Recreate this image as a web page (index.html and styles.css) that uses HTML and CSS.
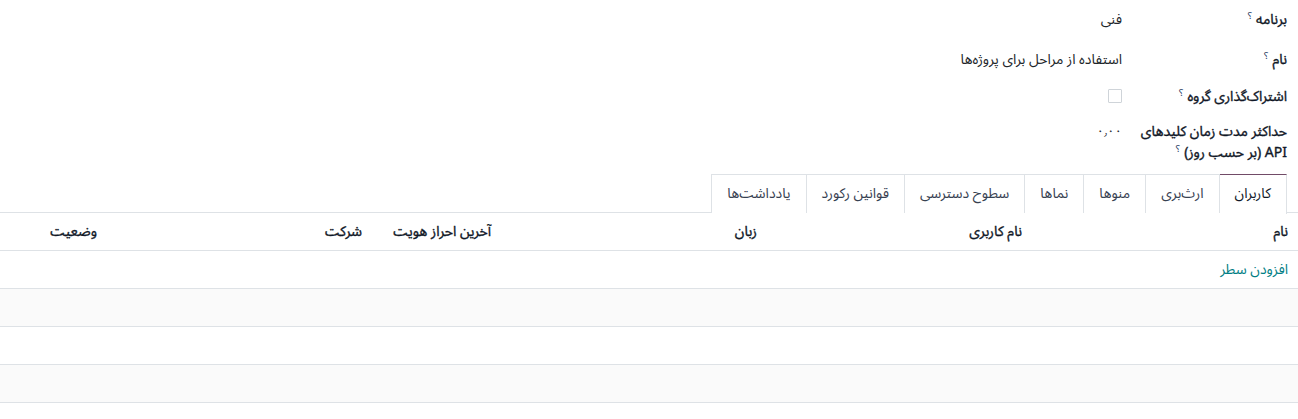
FILE: index.html
```html
<!DOCTYPE html>
<html lang="fa" dir="rtl">
<head>
<meta charset="utf-8">
<link rel="stylesheet" href="styles.css">
</head>
<body>
<div class="sheet">
  <div class="group">
    <div class="row r1">
      <div class="label">برنامه<sup class="help">؟</sup></div>
      <div class="value">فنی</div>
    </div>
    <div class="row r2">
      <div class="label">نام<sup class="help">؟</sup></div>
      <div class="value">استفاده از مراحل برای پروژه‌ها</div>
    </div>
    <div class="row r3">
      <div class="label">اشتراک‌گذاری گروه<sup class="help">؟</sup></div>
      <div class="value"><span class="check"></span></div>
    </div>
    <div class="row r4">
      <div class="label">حداکثر مدت زمان کلیدهای API (بر حسب روز)<sup class="help">؟</sup></div>
      <div class="value num">٠٫٠٠</div>
    </div>
  </div>

  <div class="tabs">
    <div class="tab active">کاربران</div>
    <div class="tab">ارث‌بری</div>
    <div class="tab">منوها</div>
    <div class="tab">نماها</div>
    <div class="tab">سطوح دسترسی</div>
    <div class="tab">قوانین رکورد</div>
    <div class="tab">یادداشت‌ها</div>
  </div>

  <table class="list">
    <colgroup>
      <col class="c1"><col class="c2"><col class="c3"><col class="c4"><col class="c5"><col class="c6">
    </colgroup>
    <thead>
      <tr>
        <th>نام</th>
        <th>نام کاربری</th>
        <th>زبان</th>
        <th>آخرین احراز هویت</th>
        <th>شرکت</th>
        <th>وضعیت</th>
      </tr>
    </thead>
    <tbody>
      <tr><td colspan="6"><a class="add">افزودن سطر</a></td></tr>
      <tr class="alt"><td colspan="6"></td></tr>
      <tr><td colspan="6"></td></tr>
      <tr class="alt"><td colspan="6"></td></tr>
    </tbody>
  </table>
</div>
</body>
</html>
```

FILE: styles.css
```css
html, body {
  margin: 0;
  padding: 0;
  background: #fff;
}
body {
  font-family: "Noto Sans Arabic", "DejaVu Sans", sans-serif;
  font-size: 14px;
  line-height: 21px;
  color: #212529;
  direction: rtl;
}
.sheet {
  width: 1298px;
}
.group {
  padding: 9px 11px 0 0;
  display: flex;
  flex-direction: column;
}
.row {
  display: grid;
  grid-template-columns: 160px 300px;
  column-gap: 5px;
}
.r1 { height: 40px; }
.r2 { height: 37px; }
.r3 { height: 35px; }
.r4 { height: 53px; }
.label {
  font-weight: normal;
  -webkit-text-stroke: 0.35px #111827;
  color: #111827;
  width: 155px;
}
.help {
  font-size: 10px;
  font-weight: normal;
  -webkit-text-stroke: 0;
  color: #1f3a5f;
  padding: 0 4px;
  vertical-align: 5px;
  line-height: 0;
}
.value {
  color: #212529;
}
.num {
  font-size: 13px;
}
.check {
  display: inline-block;
  width: 12px;
  height: 12px;
  border: 1px solid #cfd4d9;
  border-radius: 1px;
  margin-top: 3px;
  vertical-align: top;
}
.tabs {
  display: flex;
  padding-right: 11px;
  border-bottom: 1px solid #dee2e6;
  height: 39px;
  box-sizing: border-box;
}
.tab {
  padding: 0 15px;
  height: 39px;
  box-sizing: border-box;
  border: 1px solid #dee2e6;
  border-left: none;
  border-bottom: none;
  line-height: 37px;
  color: #374151;
  background: #fff;
}
.tab:last-child {
  border-left: 1px solid #dee2e6;
}
.tab.active {
  border-top: 1px solid #714b67;
  color: #111827;
  height: 40px;
  position: relative;
  z-index: 1;
}
.list {
  width: 1298px;
  border-collapse: collapse;
  table-layout: fixed;
}
.c1 { width: 266px; }
.c2 { width: 265px; }
.c3 { width: 266px; }
.c4 { width: 129px; }
.c5 { width: 265px; }
.c6 { width: 107px; }
.list th {
  text-align: right;
  font-weight: normal;
  -webkit-text-stroke: 0.35px #111827;
  white-space: nowrap;
  color: #111827;
  height: 37px;
  padding: 0 10px 0 0;
  border-bottom: 1px solid #dee2e6;
}
.list td {
  height: 37px;
  padding: 0 10px 0 0;
  border-bottom: 1px solid #dee2e6;
}
.list tr.alt td {
  background: #fafafa;
}
.add {
  color: #017e84;
  text-decoration: none;
}
```
